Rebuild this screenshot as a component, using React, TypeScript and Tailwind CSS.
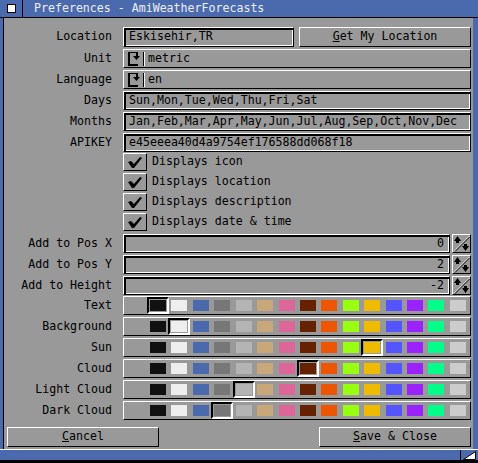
const raised = "border border-t-white border-l-white border-b-black border-r-black";
const stringFrame =
  "border border-t-white border-l-white border-b-black border-r-black shadow-[inset_2px_2px_0_#000,inset_-1px_-1px_0_#fff]";

const SWATCHES = [
  "#111111",
  "#eeeeee",
  "#4b6aae",
  "#777777",
  "#b4b4b4",
  "#c8a878",
  "#dd6699",
  "#662200",
  "#ee5500",
  "#99ff11",
  "#eebb00",
  "#5555ff",
  "#9922ff",
  "#00ff88",
  "#cccccc",
];

const COLOR_ROWS = [
  { label: "Text", selected: 0 },
  { label: "Background", selected: 1 },
  { label: "Sun", selected: 10 },
  { label: "Cloud", selected: 7 },
  { label: "Light Cloud", selected: 4 },
  { label: "Dark Cloud", selected: 3 },
];

const Row = ({ label, children, h = "h-[19px]" }: { label: string; children: React.ReactNode; h?: string }) => (
  <div className={`flex items-center ${h}`}>
    <div className="w-[106px] text-right pr-[1px] whitespace-nowrap">{label}</div>
    <div className="ml-[10px] flex-1 flex h-full">{children}</div>
  </div>
);

const CycleIcon = () => (
  <svg width="12" height="14" viewBox="0 0 12 14">
    <rect x="0" y="0" width="10" height="1" fill="#000" />
    <rect x="0" y="0" width="2" height="14" fill="#000" />
    <rect x="0" y="12" width="10" height="2" fill="#000" />
    <rect x="8" y="0" width="2" height="4" fill="#000" />
    <polygon points="5,4 12,4 8.5,8" fill="#000" />
  </svg>
);

const Cycle = ({ value }: { value: string }) => (
  <div className={`${raised} flex-1 flex items-center`}>
    <div className="ml-[4px]">
      <CycleIcon />
    </div>
    <div className="ml-[3px] w-[1px] h-[14px] bg-black" />
    <div className="w-[1px] h-[14px] bg-white" />
    <span className="ml-[3px]">{value}</span>
  </div>
);

const Field = ({ value, className = "flex-1" }: { value: string; className?: string }) => (
  <div className={`${stringFrame} ${className} flex items-center pl-[5px] overflow-hidden whitespace-nowrap`}>
    {value}
  </div>
);

const Check = ({ label }: { label: string }) => (
  <div className="flex items-center h-[20px]">
    <div className="w-[106px]" />
    <div className="ml-[10px] flex items-center">
      <div className={`${raised} w-[24px] h-[18px] flex items-center justify-center`}>
        <svg width="14" height="11" viewBox="0 0 14 11">
          <polygon points="0,5 3,4 6,7 12,0 14,1 6,11 4,11" fill="#000" />
        </svg>
      </div>
      <span className="ml-[5px]">{label}</span>
    </div>
  </div>
);

const Spinner = () => (
  <div className={`${raised} w-[19px] h-full ml-[2px]`}>
    <svg width="17" height="17" viewBox="0 0 17 17">
      <polygon points="4.5,1 1,6 3,6 3,8 6,8 6,6 8,6" fill="#000" />
      <line x1="1" y1="16.5" x2="16.5" y2="1" stroke="#fff" strokeWidth="1" />
      <line x1="2" y1="16.5" x2="16.5" y2="2" stroke="#000" strokeWidth="1" />
      <polygon points="12.5,16 9,11 11,11 11,9 14,9 14,11 16,11" fill="#000" />
    </svg>
  </div>
);

const IntRow = ({ label, value }: { label: string; value: string }) => (
  <Row label={label}>
    <div className={`${stringFrame} flex-1 flex items-center justify-end pr-[5px]`}>{value}</div>
    <Spinner />
  </Row>
);

const Palette = ({ selected }: { selected: number }) => (
  <div className={`${raised} flex-1 flex items-center pl-[26px] gap-[5.43px]`}>
    {SWATCHES.map((c, i) =>
      i === selected ? (
        <div
          key={i}
          className="-m-[3px] p-[1px] border-2 border-t-black border-l-black border-r-white border-b-white"
        >
          <div className="w-[16px] h-[11px]" style={{ backgroundColor: c }} />
        </div>
      ) : (
        <div key={i} className="w-[16px] h-[11px]" style={{ backgroundColor: c }} />
      )
    )}
  </div>
);

const Button = ({ children }: { children: React.ReactNode }) => (
  <div className={`${raised} w-[152px] h-[20px] flex items-center justify-center`}>{children}</div>
);

export default function App() {
  return (
    <div className="w-[478px] h-[463px] flex flex-col bg-[#4b6aae] font-['DejaVu_Sans_Mono',monospace] text-[11.6px] leading-none text-black">
      <div className="h-[18px] border-b border-black flex items-center">
        <div className="w-[23px] h-full border-r border-black flex items-center justify-center">
          <div className="w-[9px] h-[9px] bg-white border border-black" />
        </div>
        <span className="ml-[11px] text-[#eeeeee]">Preferences - AmiWeatherForecasts</span>
      </div>

      <div className="flex-1 flex">
        <div className="w-[4px] border-r border-black" />
        <div className="flex-1 bg-[#999999] flex flex-col pt-[9px] pl-[3px] pr-[2px] pb-[2px]">
          <div className="flex flex-col gap-[2px]">
            <Row label="Location" h="h-[20px]">
              <Field value="Eskisehir,TR" className="w-[171px]" />
              <div className={`${raised} flex-1 ml-[5px] flex items-center justify-center`}>
                <span>
                  <span className="underline">G</span>et My Location
                </span>
              </div>
            </Row>
            <Row label="Unit">
              <Cycle value="metric" />
            </Row>
            <Row label="Language">
              <Cycle value="en" />
            </Row>
            <Row label="Days">
              <Field value="Sun,Mon,Tue,Wed,Thu,Fri,Sat" />
            </Row>
            <Row label="Months">
              <Field value="Jan,Feb,Mar,Apr,May,Jun,Jul,Aug,Sep,Oct,Nov,Dec" />
            </Row>
            <Row label="APIKEY">
              <Field value="e45eeea40d4a9754ef176588dd068f18" />
            </Row>
            <div className="flex flex-col -mt-[2px]">
              <Check label="Displays icon" />
              <Check label="Displays location" />
              <Check label="Displays description" />
              <Check label="Displays date & time" />
            </div>
            <IntRow label="Add to Pos X" value="0" />
            <IntRow label="Add to Pos Y" value="2" />
            <IntRow label="Add to Height" value="-2" />
            <div className="flex flex-col gap-[2px] -mt-[1px]">
              {COLOR_ROWS.map((r) => (
                <Row key={r.label} label={r.label}>
                  <Palette selected={r.selected} />
                </Row>
              ))}
            </div>
          </div>
          <div className="mt-auto flex justify-between">
            <Button>
              <span>
                <span className="underline">C</span>ancel
              </span>
            </Button>
            <Button>
              <span>
                <span className="underline">S</span>ave &amp; Close
              </span>
            </Button>
          </div>
        </div>
        <div className="w-[5px]" />
      </div>

      <div className="h-[14px] flex border-t border-white">
        <div className="flex-1 border-b-[3px] border-black" />
        <div className="w-[18px] border-l border-black border-b-[3px] border-b-black flex items-center justify-center">
          <svg width="13" height="9" viewBox="0 0 13 9">
            <polygon points="0.5,8.5 12.5,8.5 12.5,0.5" fill="#fff" stroke="#000" strokeWidth="1" />
          </svg>
        </div>
      </div>
    </div>
  );
}
